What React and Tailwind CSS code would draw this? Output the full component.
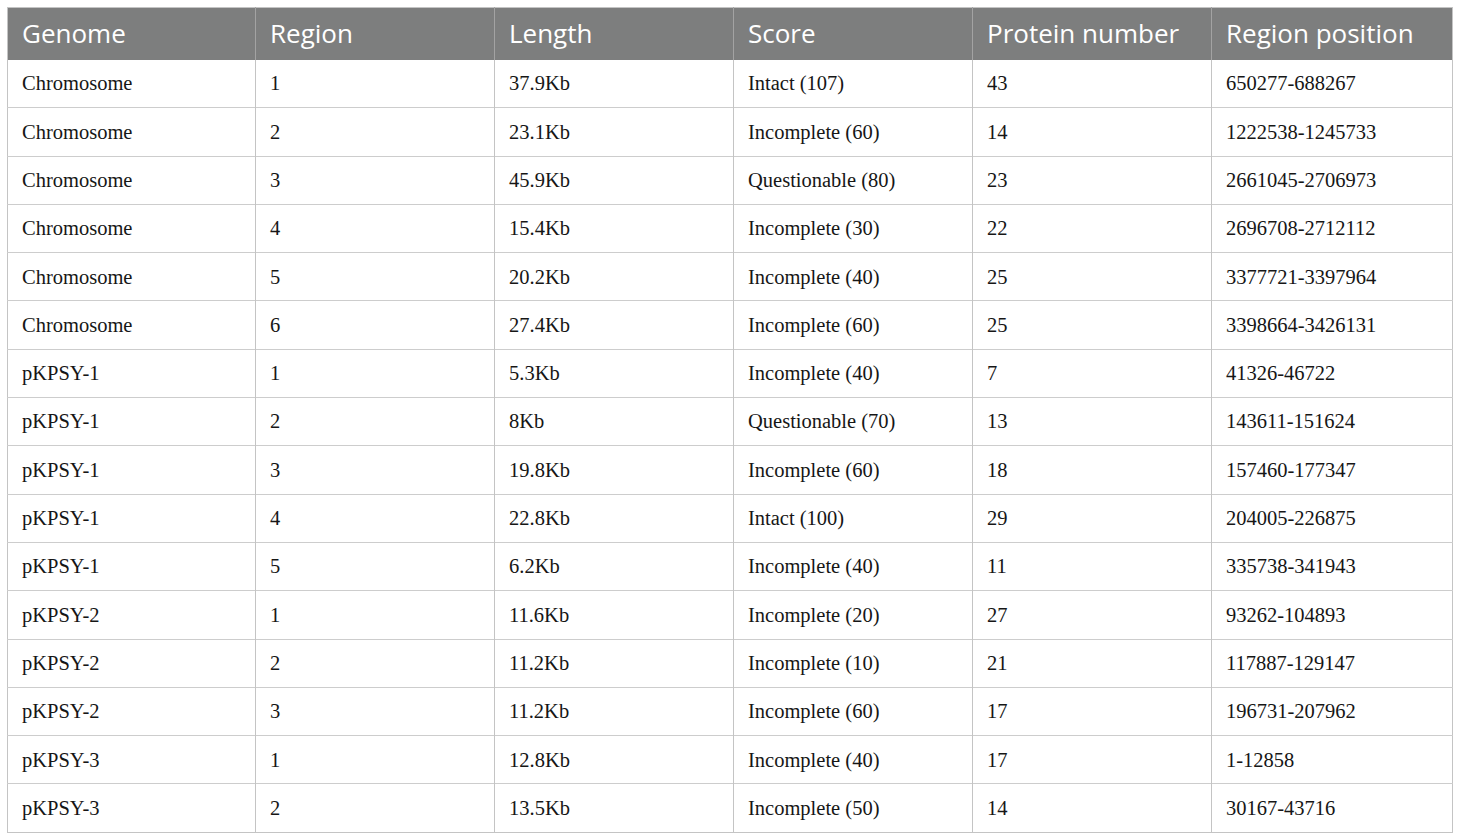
import React from "react";

const columns = ["Genome", "Region", "Length", "Score", "Protein number", "Region position"];
const widths = ["w-[248px]", "w-[239px]", "w-[239px]", "w-[239px]", "w-[239px]", "w-[241px]"];

const rows = [
    ["Chromosome", "1", "37.9Kb", "Intact (107)", "43", "650277-688267"],
    ["Chromosome", "2", "23.1Kb", "Incomplete (60)", "14", "1222538-1245733"],
    ["Chromosome", "3", "45.9Kb", "Questionable (80)", "23", "2661045-2706973"],
    ["Chromosome", "4", "15.4Kb", "Incomplete (30)", "22", "2696708-2712112"],
    ["Chromosome", "5", "20.2Kb", "Incomplete (40)", "25", "3377721-3397964"],
    ["Chromosome", "6", "27.4Kb", "Incomplete (60)", "25", "3398664-3426131"],
    ["pKPSY-1", "1", "5.3Kb", "Incomplete (40)", "7", "41326-46722"],
    ["pKPSY-1", "2", "8Kb", "Questionable (70)", "13", "143611-151624"],
    ["pKPSY-1", "3", "19.8Kb", "Incomplete (60)", "18", "157460-177347"],
    ["pKPSY-1", "4", "22.8Kb", "Intact (100)", "29", "204005-226875"],
    ["pKPSY-1", "5", "6.2Kb", "Incomplete (40)", "11", "335738-341943"],
    ["pKPSY-2", "1", "11.6Kb", "Incomplete (20)", "27", "93262-104893"],
    ["pKPSY-2", "2", "11.2Kb", "Incomplete (10)", "21", "117887-129147"],
    ["pKPSY-2", "3", "11.2Kb", "Incomplete (60)", "17", "196731-207962"],
    ["pKPSY-3", "1", "12.8Kb", "Incomplete (40)", "17", "1-12858"],
    ["pKPSY-3", "2", "13.5Kb", "Incomplete (50)", "14", "30167-43716"],
];

const App = () => {
    return (
        <div className="w-[1460px] h-[840px] bg-white pt-[7px] pl-[7px]">
            <table className="w-[1445px] table-fixed border-collapse border border-[#c4c4c4]">
                <thead>
                    <tr className="h-[52px] bg-[#7d7e7e]">
                        {columns.map((col, i) => (
                            <th
                                key={col}
                                className={`${widths[i]} text-left font-normal text-white text-[26px] px-[14px] pb-[2px] border-l border-[#a3a3a3] first:border-l-0 font-['Open_Sans',sans-serif] leading-none`}
                            >
                                {col}
                            </th>
                        ))}
                    </tr>
                </thead>
                <tbody>
                    {rows.map((row, r) => (
                        <tr key={r} className="h-[48.3px] border-t border-[#cdcdcd] first:border-t-0">
                            {row.map((cell, c) => (
                                <td
                                    key={c}
                                    className="px-[14px] text-[20.5px] text-[#161616] border-l border-[#c4c4c4] first:border-l-0 font-['Liberation_Serif',serif] leading-none"
                                >
                                    {cell}
                                </td>
                            ))}
                        </tr>
                    ))}
                </tbody>
            </table>
        </div>
    );
};

export default App;
